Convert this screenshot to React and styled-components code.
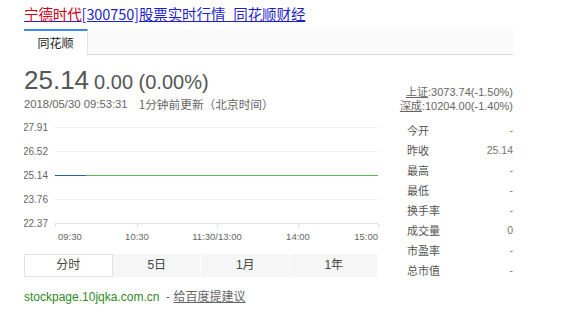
import styled, { createGlobalStyle } from "styled-components";

const GlobalStyle = createGlobalStyle`
  body {
    margin: 0;
    background: #fff;
    font-family: "Liberation Sans", Arial, "Noto Sans CJK SC", sans-serif;
    color: #333;
  }
`;

const stats = [
  { label: "今开", value: "-", up: true },
  { label: "昨收", value: "25.14" },
  { label: "最高", value: "-" },
  { label: "最低", value: "-" },
  { label: "换手率", value: "-" },
  { label: "成交量", value: "0" },
  { label: "市盈率", value: "-" },
  { label: "总市值", value: "-" },
];

const periods = ["分时", "5日", "1月", "1年"];

const yTicks = [
  { y: 7.5, label: "27.91" },
  { y: 31.5, label: "26.52" },
  { y: 55.5, label: "25.14" },
  { y: 79.5, label: "23.76" },
  { y: 103.5, label: "22.37" },
];

const xTicks = [
  { x: 31, label: "09:30", anchor: "start", dx: 3 },
  { x: 113, label: "10:30", anchor: "middle", dx: 0 },
  { x: 193, label: "11:30/13:00", anchor: "middle", dx: 0 },
  { x: 274, label: "14:00", anchor: "middle", dx: 0 },
  { x: 354, label: "15:00", anchor: "end", dx: 0 },
];

const Chart = () => (
  <ChartSvg width="356" height="125" viewBox="0 0 356 125">
    {yTicks.map((t) => (
      <g key={t.label}>
        <line x1="31" x2="354" y1={t.y} y2={t.y} stroke="#f0f0f0" shapeRendering="crispEdges" />
        <text x="24" y={t.y + 3.5} textAnchor="end" fontSize="10" fill="#666">
          {t.label}
        </text>
      </g>
    ))}
    <line x1="31" x2="354" y1="103.5" y2="103.5" stroke="#e3e3e3" shapeRendering="crispEdges" />
    {xTicks.map((t) => (
      <g key={t.label}>
        <line x1={t.x + 0.5} x2={t.x + 0.5} y1="103.5" y2="107" stroke="#ddd" shapeRendering="crispEdges" />
        <text x={t.x + t.dx} y="119.5" textAnchor={t.anchor} fontSize="9.5" fill="#666">
          {t.label}
        </text>
      </g>
    ))}
    <line x1="62" x2="354" y1="55.5" y2="55.5" stroke="#5cb85c" shapeRendering="crispEdges" />
    <line x1="31" x2="62" y1="55.5" y2="55.5" stroke="#2a5db0" shapeRendering="crispEdges" />
  </ChartSvg>
);

export default function App() {
  return (
    <Page>
      <GlobalStyle />
      <Title href="#">
        <em>宁德时代</em>[300750]股票实时行情_同花顺财经
      </Title>
      <TabBar>
        <Tab>同花顺</Tab>
      </TabBar>
      <Header>
        <div>
          <PriceLine>
            <Price>25.14</Price>
            <Change>0.00 (0.00%)</Change>
          </PriceLine>
          <DateLine>
            <Stamp>2018/05/30 09:53:31</Stamp>
            <Note>1分钟前更新（北京时间）</Note>
          </DateLine>
        </div>
        <Indices>
          <div>
            <u>上证</u>:3073.74(-1.50%)
          </div>
          <div>
            <u>深成</u>:10204.00(-1.40%)
          </div>
        </Indices>
      </Header>
      <Body>
        <ChartCol>
          <Chart />
          <Periods>
            {periods.map((p, i) => (
              <Period key={p} active={i === 0}>
                {p}
              </Period>
            ))}
          </Periods>
        </ChartCol>
        <Stats>
          {stats.map((s) => (
            <StatRow key={s.label}>
              <span>{s.label}</span>
              <StatValue up={s.up}>{s.value}</StatValue>
            </StatRow>
          ))}
        </Stats>
      </Body>
      <Footer>
        <Site>stockpage.10jqka.com.cn</Site>
        <span>  - </span>
        <Advice href="#">给百度提建议</Advice>
      </Footer>
    </Page>
  );
}

const Page = styled.div`
  width: 489px;
  padding: 4px 0 0 24px;
`;

const Title = styled.a`
  display: block;
  font-family: "Noto Sans CJK SC", "Liberation Sans", sans-serif;
  font-size: 14.5px;
  line-height: 20px;
  color: #1f1fcc;
  text-decoration: underline;
  letter-spacing: -0.1px;

  em {
    font-style: normal;
    color: #d0021b;
  }
`;

const TabBar = styled.div`
  margin-top: 5px;
  height: 25px;
  background: #fafafa;
  border-bottom: 1px solid #dcdcdc;
  display: flex;
`;

const Tab = styled.div`
  width: 63px;
  height: 24px;
  background: #fff;
  border-top: 2px solid #3a8ee6;
  border-right: 1px solid #e3e3e3;
  margin-bottom: -1px;
  font-family: "Noto Sans CJK SC", sans-serif;
  font-size: 12px;
  line-height: 23px;
  text-align: center;
  color: #222;
`;

const Header = styled.div`
  margin-top: 10px;
  display: flex;
  justify-content: space-between;
  align-items: flex-end;
`;

const PriceLine = styled.div`
  display: flex;
  align-items: baseline;
  height: 31px;
  color: #555;
`;

const Price = styled.span`
  font-size: 26px;
  line-height: 31px;
  margin-right: 5px;
`;

const Change = styled.span`
  font-size: 20px;
`;

const DateLine = styled.div`
  display: flex;
  gap: 11px;
  line-height: 16px;
  color: #666;
`;

const Stamp = styled.span`
  font-family: "Liberation Sans", sans-serif;
  font-size: 11.3px;
`;

const Note = styled.span`
  font-family: "Noto Sans CJK SC", sans-serif;
  font-size: 11.7px;
`;

const Indices = styled.div`
  text-align: right;
  font-size: 11px;
  line-height: 13px;
  color: #666;
  margin-bottom: -1px;

  u {
    font-family: "Noto Sans CJK SC", sans-serif;
  }
`;

const Body = styled.div`
  margin-top: 8px;
  display: flex;
  justify-content: space-between;
`;

const ChartCol = styled.div`
  width: 356px;
`;

const ChartSvg = styled.svg`
  display: block;
  font-family: "Liberation Sans", sans-serif;
`;

const Periods = styled.div`
  margin-top: 9px;
  width: 354px;
  height: 23px;
  display: grid;
  grid-template-columns: repeat(4, 1fr);
  background: #f7f7f7;
`;

const Period = styled.div`
  font-family: "Liberation Sans", "Noto Sans CJK SC", sans-serif;
  font-size: 12px;
  line-height: 21px;
  text-align: center;
  color: #444;
  background: ${(p) => (p.active ? "#fff" : "#f6f6f6")};
  border: 1px solid ${(p) => (p.active ? "#e2e2e2" : "#f6f6f6")};
  border-right-color: ${(p) => (p.active ? "#e2e2e2" : "#fff")};
`;

const Stats = styled.div`
  width: 106px;
  display: flex;
  flex-direction: column;
`;

const StatRow = styled.div`
  height: 20px;
  display: flex;
  align-items: center;
  justify-content: space-between;
  font-family: "Noto Sans CJK SC", sans-serif;
  font-size: 11px;
  color: #555;
`;

const StatValue = styled.span`
  font-family: "Liberation Sans", sans-serif;
  font-size: 10.5px;
  color: ${(p) => (p.up ? "#3a9a3a" : "#777")};
`;

const Footer = styled.div`
  margin-top: 8px;
  font-size: 12px;
  line-height: 16px;
  color: #666;
  white-space: pre;
`;

const Site = styled.span`
  color: #2f8a1f;
`;

const Advice = styled.a`
  color: #666;
  text-decoration: underline;
  font-family: "Noto Sans CJK SC", sans-serif;
`;
